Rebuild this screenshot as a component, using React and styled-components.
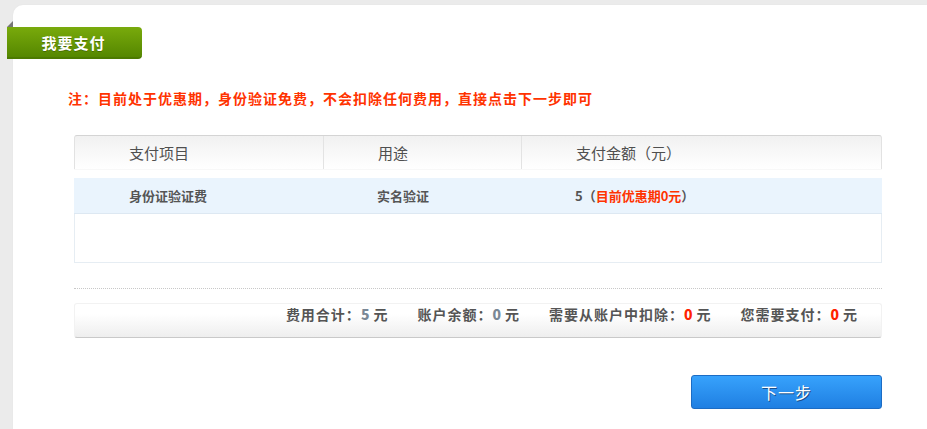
import React from 'react';
import styled, { createGlobalStyle } from 'styled-components';

const GlobalStyle = createGlobalStyle`
  html, body {
    margin: 0;
    padding: 0;
    background: #ebebeb;
    font-family: "Liberation Sans", "Noto Sans CJK SC", sans-serif;
  }
`;

const Page = styled.div`
  padding: 5px 0 0 13px;
  height: 424px;
  overflow: hidden;
`;

const Card = styled.div`
  background: #fff;
  border-top-left-radius: 10px;
  min-height: 424px;
  padding-top: 22px;
  box-shadow: 0 0 2px rgba(0, 0, 0, 0.04);
`;

const Tab = styled.div`
  position: relative;
  margin-left: -6px;
  width: 135px;
  height: 32px;
  border-bottom: 2px solid #4c7a00;
  border-radius: 0 4px 4px 0;
  background: linear-gradient(#79aa0c, #558700);
  color: #fff;
  font: bold 15px "Noto Sans CJK SC", sans-serif;
  letter-spacing: 1px;
  display: flex;
  align-items: center;
  justify-content: center;
  padding-right: 2px;
  box-sizing: border-box;
  text-shadow: 0 1px 0 rgba(0, 0, 0, 0.25);

  &::before {
    content: '';
    position: absolute;
    left: 0;
    top: -6px;
    border-style: solid;
    border-width: 0 0 6px 6px;
    border-color: transparent transparent #777 transparent;
  }
`;

const Notice = styled.p`
  margin: 29px 0 0 55px;
  color: #ff3300;
  font: bold 14px/20px "Noto Sans CJK SC", sans-serif;
  letter-spacing: 1px;
`;

const Section = styled.div`
  margin: 27px 45px 0 61px;
`;

const Head = styled.div`
  display: grid;
  grid-template-columns: 248px 198px 1fr;
  height: 33px;
  border: 1px solid #e2e2e2;
  border-top-color: #d4d4d4;
  border-bottom: none;
  border-radius: 3px 3px 0 0;
  background: linear-gradient(#f1f1f1, #fff);
  box-shadow: 0 1px 1px rgba(0, 0, 0, 0.03);
`;

const HeadCell = styled.div`
  display: flex;
  align-items: center;
  padding-left: 54px;
  font: 15px "Noto Sans CJK SC", sans-serif;
  color: #4f4f4f;
  border-left: ${(p) => (p.$first ? 'none' : '1px solid #e3e3e3')};
`;

const Body = styled.div`
  margin-top: 9px;
  border: 1px solid #e6edf3;
  border-top: none;
  height: 84px;
`;

const Row = styled.div`
  display: grid;
  grid-template-columns: 248px 198px 1fr;
  height: 35px;
  background: #eaf4fd;
  border-bottom: 1px solid #dde8f2;
  margin: 0 -1px;
`;

const Cell = styled.div`
  display: flex;
  align-items: center;
  padding-left: 55px;
  font: bold 13px "Noto Sans CJK SC", sans-serif;
  color: #555;
`;

const Red = styled.span`
  color: #ff3300;
`;

const Dotted = styled.div`
  margin-top: 25px;
  border-top: 1px dotted #c8c8c8;
`;

const Summary = styled.div`
  margin-top: 14px;
  height: 33px;
  border: 1px solid #f2f2f2;
  border-bottom: 1px solid #c9c9c9;
  border-radius: 3px;
  background: linear-gradient(#fff 30%, #eeeeee);
  display: flex;
  justify-content: flex-end;
  align-items: flex-start;
  gap: 29px;
  padding: 0 23px 0 0;
`;

const Item = styled.span`
  font: bold 14px/20px "Noto Sans CJK SC", sans-serif;
  letter-spacing: 1px;
  color: #555;
`;

const Num = styled.b`
  color: ${(p) => (p.$red ? '#ff2200' : '#7a8896')};
  margin-right: 3px;
`;

const Actions = styled.div`
  display: flex;
  justify-content: flex-end;
  margin-top: 37px;
`;

const NextButton = styled.button`
  width: 191px;
  height: 34px;
  border: 1px solid #1c6cc4;
  border-radius: 3px;
  background: linear-gradient(#37a2fc, #1f7fe2);
  color: #fff;
  font: 16px "Noto Sans CJK SC", sans-serif;
  letter-spacing: 1px;
  text-shadow: 1px 1px 0 #1a4f8a;
  cursor: pointer;
`;

export default function App() {
  return (
    <>
      <GlobalStyle />
      <Page>
        <Card>
          <Tab>我要支付</Tab>
          <Notice>注：目前处于优惠期，身份验证免费，不会扣除任何费用，直接点击下一步即可</Notice>
          <Section>
            <Head>
              <HeadCell $first>支付项目</HeadCell>
              <HeadCell>用途</HeadCell>
              <HeadCell>支付金额（元）</HeadCell>
            </Head>
            <Body>
              <Row>
                <Cell>身份证验证费</Cell>
                <Cell>实名验证</Cell>
                <Cell>
                  5（<Red>目前优惠期0元</Red>）
                </Cell>
              </Row>
            </Body>
            <Dotted />
            <Summary>
              <Item>费用合计：<Num>5</Num>元</Item>
              <Item>账户余额：<Num>0</Num>元</Item>
              <Item>需要从账户中扣除：<Num $red>0</Num>元</Item>
              <Item>您需要支付：<Num $red>0</Num>元</Item>
            </Summary>
            <Actions>
              <NextButton>下一步</NextButton>
            </Actions>
          </Section>
        </Card>
      </Page>
    </>
  );
}
